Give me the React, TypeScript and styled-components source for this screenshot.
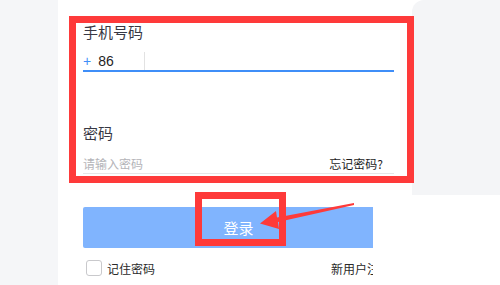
import styled, { createGlobalStyle } from 'styled-components';

const GlobalStyle = createGlobalStyle`
	html, body {
		margin: 0;
		padding: 0;
		background: #ffffff;
	}
	body {
		font-family: "Noto Sans CJK SC", "Noto Sans", sans-serif;
	}
`;

const Page = styled.div`
	position: relative;
	display: flex;
	width: 500px;
	height: 285px;
	overflow: hidden;
	background: #ffffff;
`;

const Sidebar = styled.div`
	width: 58px;
	flex-shrink: 0;
	background: #f5f6f8;
`;

const Main = styled.div`
	flex: 1;
	display: flex;
	align-items: flex-start;
`;

const FormCol = styled.div`
	width: 311px;
	margin-left: 25px;
	margin-right: 18px;
	display: flex;
	flex-direction: column;
`;

const SidePanel = styled.div`
	flex: 1;
	height: 195px;
	background: #f4f5f7;
	border-top-left-radius: 12px;
`;

const Label = styled.div<{ $gap: number }>`
	margin-top: ${p => p.$gap}px;
	font-size: 15px;
	line-height: 20px;
	color: #383844;
`;

const InputRow = styled.div<{ $focus?: boolean; $gap: number }>`
	margin-top: ${p => p.$gap}px;
	height: ${p => (p.$focus ? 18 : 20)}px;
	display: flex;
	align-items: center;
	border-bottom: ${p => (p.$focus ? '2px solid #3f8ef8' : '1px solid #e6e6e8')};
`;

const Prefix = styled.span`
	display: flex;
	align-items: center;
	width: 61px;
	height: 100%;
	border-right: 1px solid #e2e2e2;
	font-family: "Liberation Sans", "Noto Sans CJK SC", sans-serif;
	font-size: 14px;
	color: #1f1f1f;
`;

const Plus = styled.span`
	color: #3f8ef8;
	margin-right: 7px;
`;

const Placeholder = styled.span`
	flex: 1;
	font-size: 12px;
	color: #b4b4b8;
`;

const TextLink = styled.span`
	font-size: 12px;
	color: #1e1e1e;
	margin-right: 11px;
`;

const Clip = styled.div`
	width: 290px;
	overflow: hidden;
`;

const Inner = styled.div`
	width: 311px;
`;

const Button = styled.div`
	margin-top: 33px;
	height: 41px;
	display: flex;
	align-items: center;
	justify-content: center;
	background: #80b4fe;
	border-radius: 2px;
	color: #ffffff;
	font-size: 15px;
`;

const BottomRow = styled.div`
	margin-top: 12px;
	height: 16px;
	display: flex;
	align-items: center;
	justify-content: space-between;
	font-size: 12px;
	color: #2a2a2a;
`;

const Remember = styled.label`
	display: flex;
	align-items: center;
	gap: 5px;
	margin-left: 3px;
`;

const Check = styled.span`
	width: 14px;
	height: 14px;
	border: 1px solid #c9c9cc;
	border-radius: 3px;
	background: #fff;
`;

const Register = styled.span`
	margin-right: 3px;
`;

const Mark = styled.div<{ $x: number; $y: number; $w: number; $h: number }>`
	position: absolute;
	left: ${p => p.$x}px;
	top: ${p => p.$y}px;
	width: ${p => p.$w}px;
	height: ${p => p.$h}px;
	box-sizing: border-box;
	border: 7px solid #fe3a3a;
	pointer-events: none;
`;

const Arrow = styled.svg`
	position: absolute;
	left: 0;
	top: 0;
	pointer-events: none;
`;

export default function App() {
	return (
		<>
			<GlobalStyle />
			<Page>
				<Sidebar />
				<Main>
					<FormCol>
						<Label $gap={22}>手机号码</Label>
						<InputRow $focus $gap={10}>
							<Prefix>
								<Plus>+</Plus>86
							</Prefix>
						</InputRow>
						<Label $gap={51}>密码</Label>
						<InputRow $gap={10}>
							<Placeholder>请输入密码</Placeholder>
							<TextLink>忘记密码?</TextLink>
						</InputRow>
						<Clip>
							<Inner>
								<Button>登录</Button>
								<BottomRow>
									<Remember>
										<Check />
										记住密码
									</Remember>
									<Register>新用户注册</Register>
								</BottomRow>
							</Inner>
						</Clip>
					</FormCol>
					<SidePanel />
				</Main>
				<Mark $x={69} $y={16} $w={345} $h={167} />
				<Mark $x={195} $y={192} $w={91} $h={54} />
				<Arrow width="500" height="285" viewBox="0 0 500 285">
					<polygon
						points="354,203 277,217.5 276,211 260,223.5 279,229 278,222 354,205"
						fill="#fe3a3a"
					/>
				</Arrow>
			</Page>
		</>
	);
}
